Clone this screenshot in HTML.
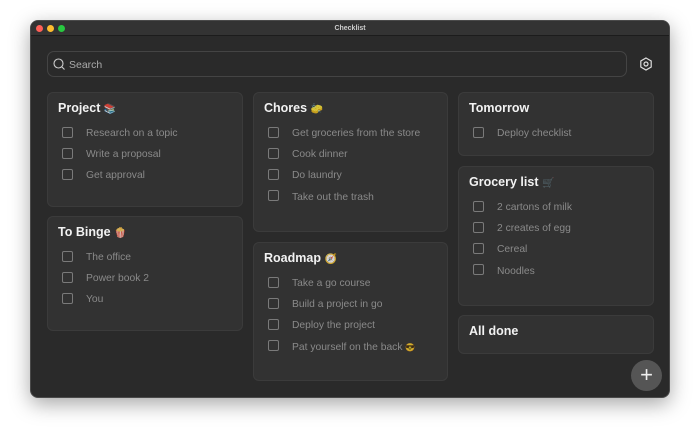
<!DOCTYPE html>
<html><head><style>
*{box-sizing:border-box;margin:0;padding:0}
body{width:700px;height:438px;background:#fff;font-family:"Liberation Sans",sans-serif;position:relative;overflow:hidden}
.win{position:absolute;left:30px;top:20px;width:640px;height:378px;background:#2a2a2a;border-radius:8px;box-shadow:0 6px 20px rgba(0,0,0,.35);overflow:hidden;border:1px solid #4a4a4a}
.tb{height:15px;background:#333;border-bottom:1px solid #1c1c1c;text-align:center;color:#ccc;font-size:7px;font-weight:bold;line-height:15px;position:relative}
.dot{position:absolute;top:4px;width:7px;height:7px;border-radius:50%}
.search{position:absolute;left:16px;top:30px;width:580px;height:26px;border:1px solid #444;border-radius:7px;color:#aaa;font-size:10.5px;display:flex;align-items:center;padding-left:21px;padding-top:1px}
.card{position:absolute;background:#323232;border:1px solid #3b3b3b;border-radius:6px;padding:0 10px}
.card h3{color:#f2f2f2;font-size:12.5px;font-weight:bold;margin-top:8px;height:20.5px;line-height:14px}
.card h3 span{font-size:10px;opacity:.8}
.it{height:21.3px;color:#8a8a8a;font-size:10.3px;display:flex;align-items:center;padding-left:28px;padding-top:2px;position:relative}
.it:before{content:"";position:absolute;left:4px;top:5px;width:9px;height:9px;border:1px solid #7a7a7a;border-radius:2px}
.plus{position:absolute;left:600px;top:339px;width:31px;height:31px;border-radius:50%;background:#555;color:#eee;font-size:22px;text-align:center;line-height:29px}
</style></head><body>
<div class="win">
<div class="tb">Checklist<span class="dot" style="left:5px;background:#fe5f57"></span><span class="dot" style="left:16px;background:#febc2e"></span><span class="dot" style="left:27px;background:#28c840"></span></div>
<div class="search"><svg style="position:absolute;left:5px;top:6px" width="12" height="12" viewBox="0 0 12 12"><circle cx="5.5" cy="5.5" r="4.5" fill="none" stroke="#ccc" stroke-width="1.1"/><path d="M9 9l2.5 2.5" stroke="#ccc" stroke-width="1.1"/></svg>Search</div>
<svg style="position:absolute;left:608px;top:36px" width="14" height="14" viewBox="0 0 14 14"><path d="M7 1l5.2 3v6L7 13 1.8 10V4z" fill="none" stroke="#ddd" stroke-width="1.2"/><circle cx="7" cy="7" r="2" fill="none" stroke="#ddd" stroke-width="1.2"/></svg>

<div class="card" style="left:16px;top:71px;width:196px;height:115px"><h3>Project <span>📚</span></h3><div class="it">Research on a topic</div><div class="it">Write a proposal</div><div class="it">Get approval</div></div>
<div class="card" style="left:16px;top:195px;width:196px;height:115px"><h3>To Binge <span>🍿</span></h3><div class="it">The office</div><div class="it">Power book 2</div><div class="it">You</div></div>
<div class="card" style="left:222px;top:71px;width:195px;height:140px"><h3>Chores <span>🧽</span></h3><div class="it">Get groceries from the store</div><div class="it">Cook dinner</div><div class="it">Do laundry</div><div class="it">Take out the trash</div></div>
<div class="card" style="left:222px;top:221px;width:195px;height:139px"><h3>Roadmap <span>🧭</span></h3><div class="it">Take a go course</div><div class="it">Build a project in go</div><div class="it">Deploy the project</div><div class="it">Pat yourself on the back&nbsp;<span style="font-size:8px;opacity:.8">😎</span></div></div>
<div class="card" style="left:427px;top:71px;width:196px;height:64px"><h3>Tomorrow</h3><div class="it">Deploy checklist</div></div>
<div class="card" style="left:427px;top:145px;width:196px;height:140px"><h3>Grocery list <span style="opacity:.4">🛒</span></h3><div class="it">2 cartons of milk</div><div class="it">2 creates of egg</div><div class="it">Cereal</div><div class="it">Noodles</div></div>
<div class="card" style="left:427px;top:294px;width:196px;height:39px"><h3>All done</h3></div>
<div class="plus">+</div>
</div>
</body></html>
